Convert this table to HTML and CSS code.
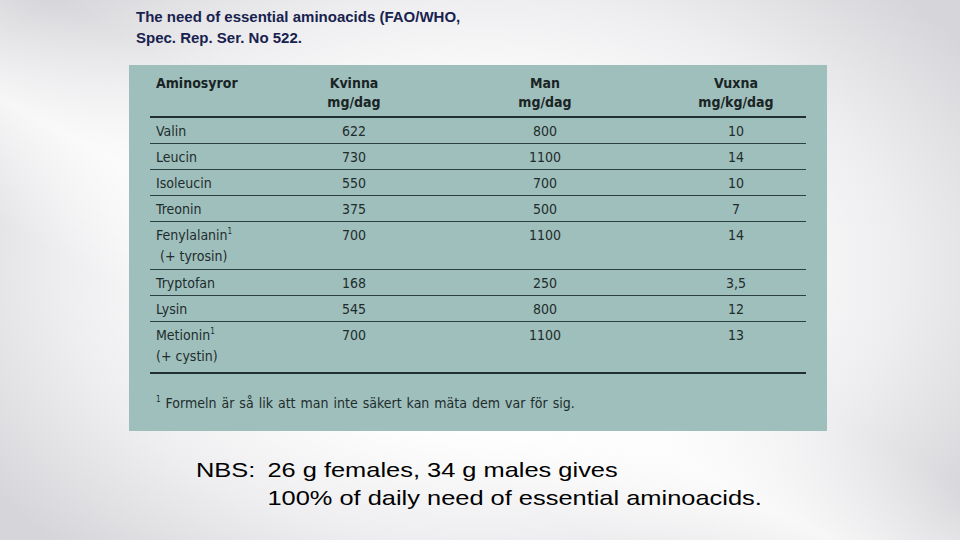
FILE: index.html
```html
<!DOCTYPE html>
<html lang="en">
<head>
<meta charset="utf-8">
<title>The need of essential aminoacids</title>
<link rel="stylesheet" href="styles.css">
</head>
<body>
<div class="slide">
  <h1 class="title">The need of essential aminoacids (FAO/WHO,<br>Spec. Rep. Ser. No 522.</h1>

  <div class="figure">
    <div class="tbl">
      <div class="row head">
        <div class="c1">Aminosyror</div>
        <div class="cn">Kvinna<br>mg/dag</div>
        <div class="cn">Man<br>mg/dag</div>
        <div class="cn c4">Vuxna<br>mg/kg/dag</div>
      </div>
      <div class="row">
        <div class="c1">Valin</div><div class="cn">622</div><div class="cn">800</div><div class="cn c4">10</div>
      </div>
      <div class="row">
        <div class="c1">Leucin</div><div class="cn">730</div><div class="cn">1100</div><div class="cn c4">14</div>
      </div>
      <div class="row">
        <div class="c1">Isoleucin</div><div class="cn">550</div><div class="cn">700</div><div class="cn c4">10</div>
      </div>
      <div class="row">
        <div class="c1">Treonin</div><div class="cn">375</div><div class="cn">500</div><div class="cn c4">7</div>
      </div>
      <div class="row double">
        <div class="c1">Fenylalanin<sup>1</sup><br><span class="indent">(+ tyrosin)</span></div><div class="cn">700</div><div class="cn">1100</div><div class="cn c4">14</div>
      </div>
      <div class="row">
        <div class="c1">Tryptofan</div><div class="cn">168</div><div class="cn">250</div><div class="cn c4">3,5</div>
      </div>
      <div class="row">
        <div class="c1">Lysin</div><div class="cn">545</div><div class="cn">800</div><div class="cn c4">12</div>
      </div>
      <div class="row double last">
        <div class="c1">Metionin<sup>1</sup><br>(+ cystin)</div><div class="cn">700</div><div class="cn">1100</div><div class="cn c4">13</div>
      </div>
    </div>
    <p class="foot"><sup>1</sup> Formeln är så lik att man inte säkert kan mäta dem var för sig.</p>
  </div>

  <div class="note">
    <div class="label">NBS:</div>
    <div class="lines">26 g females, 34 g males gives<br>100% of daily need of essential aminoacids.</div>
  </div>
</div>
</body>
</html>
```

FILE: styles.css
```css
html, body {
  margin: 0;
  padding: 0;
}

body {
  width: 960px;
  height: 540px;
  overflow: hidden;
}

.slide {
  width: 960px;
  height: 540px;
  box-sizing: border-box;
  padding-top: 6px;
  overflow: hidden;
  background:
    linear-gradient(28deg, rgba(255,255,255,0) 30%, rgba(255,255,255,0.75) 42%, rgba(255,255,255,0) 54%),
    radial-gradient(ellipse 62% 72% at 50% 50%, #ffffff 40%, #eeeef0 70%, #d6d6da 100%);
}

.title {
  margin: 0 0 0 136px;
  font-family: "Liberation Sans", Arial, sans-serif;
  font-weight: bold;
  font-size: 15px;
  line-height: 21px;
  color: #18224f;
}

.figure {
  margin: 17px 0 0 129px;
  width: 698px;
  height: 366px;
  box-sizing: border-box;
  padding: 9px 21px 0 21px;
  background: #9ebfbc;
  font-family: "DejaVu Sans Condensed", "DejaVu Sans", sans-serif;
  font-stretch: condensed;
  font-size: 14px;
  color: #1f2c2c;
}

.tbl {
  display: flex;
  flex-direction: column;
}

.row {
  display: grid;
  grid-template-columns: 140px 128px 254px 134px;
  padding: 3px 0 1px;
  line-height: 21px;
  border-bottom: 1px solid #2c3f40;
}

.row.head {
  padding: 0 0 4px;
  line-height: 19px;
  font-weight: bold;
  color: #1a2424;
  border-bottom: 2px solid #22302f;
}

.row.double {
  padding-bottom: 2px;
}

.row.last {
  padding-bottom: 5px;
  border-bottom: 2px solid #22302f;
}

.c1 {
  padding-left: 6px;
  text-align: left;
}

.cn {
  text-align: center;
}

.c4 {
  padding-right: 6px;
}

.indent {
  padding-left: 4px;
}

sup {
  font-size: 8px;
  line-height: 0;
  vertical-align: 6px;
}

.foot {
  margin: 19px 0 0 6px;
  line-height: 21px;
  word-spacing: 1px;
}

.note {
  display: flex;
  width: 480px;
  margin: 25px 0 0 196px;
  font-family: "Liberation Sans", Arial, sans-serif;
  font-size: 21px;
  line-height: 28px;
  color: #000000;
  transform: scaleX(1.21);
  transform-origin: left top;
}

.label {
  width: 59px;
  flex: none;
}
```
